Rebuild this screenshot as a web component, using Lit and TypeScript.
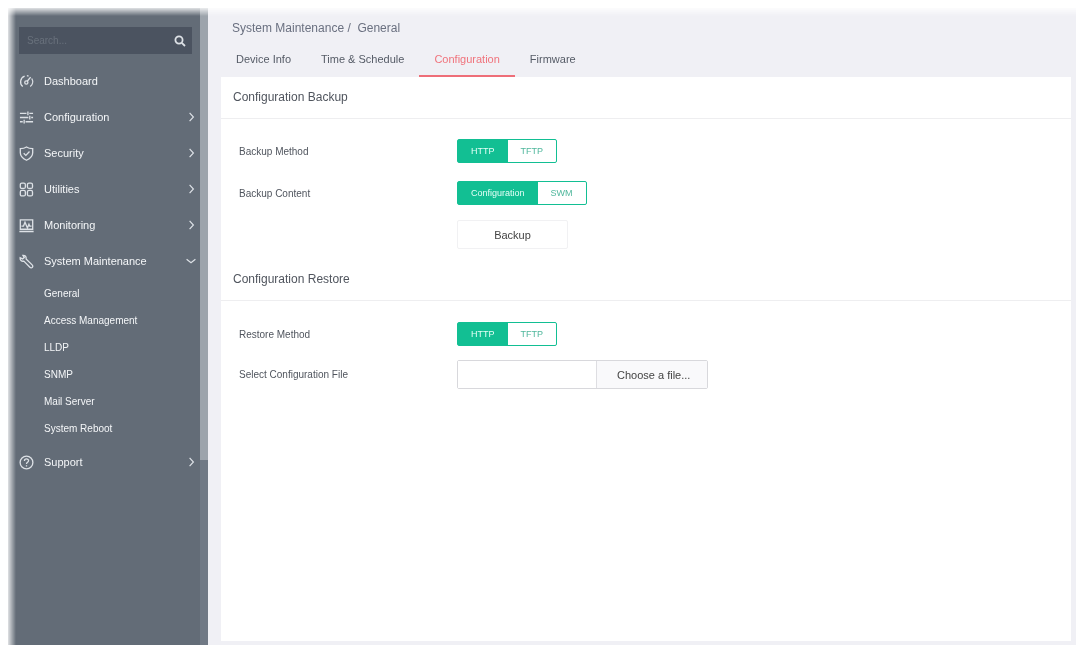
import { LitElement, html, css, svg, nothing } from "lit";
import { customElement, property, state } from "lit/decorators.js";
import { classMap } from "lit/directives/class-map.js";

const icons = {
  dashboard: svg`<path d="M4 13.4A6.600 6.600 0 0 1 6 2.200M8.400 1.800a6.600 6.600 0 0 1 1.800.4M13.600 4.800a6.600 6.600 0 0 1-1.600 8.600"/><circle cx="7.800" cy="9" r="1.700"/><path d="M8.800 7.700l3.600-4.400"/>`,
  configuration: svg`<path d="M1 3.500h7M11 3.500h4M1 8h9M13 8h2M1 12.500h3M7 12.500h8M9.500 1.500v4M11.500 6v4M5.500 10.500v4"/>`,
  security: svg`<path d="M8 1C6 2.400 3.600 2.800 1.400 2.800v4.400c0 3.800 2.600 6.200 6.600 8 4-1.800 6.600-4.200 6.600-8V2.800C12.400 2.800 10 2.400 8 1z"/><path d="M5 7.800l2.300 2.200L11.200 5.800"/>`,
  utilities: svg`<rect x="1.400" y="1.200" width="5.400" height="5.600" rx="1.600"/><rect x="9" y="1.200" width="5.400" height="5.600" rx="1.600"/><rect x="1.400" y="9" width="5.400" height="5.800" rx="1.600"/><rect x="9" y="9" width="5.400" height="5.800" rx="1.600"/>`,
  monitoring: svg`<path d="M1.400 12V2h13.200v10zM.4 14.400h15.200"/><path d="M2.600 8.600h2.200l1.600-4 2.600 6 1.600-4 .8 2h2"/>`,
  maintenance: svg`<path d="M4.200 1.400l1.400 2.400-1.800 1.400L1.200 4C.8 6.400 2.600 8.200 5.200 7.600l6.400 6.600c.8.8 2 .8 2.600 0 .8-.8.6-1.800-.2-2.600L7.600 5.400C8 3 6.600 1.200 4.200 1.400z"/>`,
  support: svg`<circle cx="8" cy="8" r="6.800"/><path d="M5.800 6.400c0-3 4.600-2.800 4.400-.2C10.100 7.800 8 7.800 8 9.600M8 11v1.300"/>`,
};

interface MenuItem {
  label: string;
  icon: keyof typeof icons;
  expandable: boolean;
  children?: string[];
}

const menu: MenuItem[] = [
  { label: "Dashboard", icon: "dashboard", expandable: false },
  { label: "Configuration", icon: "configuration", expandable: true },
  { label: "Security", icon: "security", expandable: true },
  { label: "Utilities", icon: "utilities", expandable: true },
  { label: "Monitoring", icon: "monitoring", expandable: true },
  {
    label: "System Maintenance",
    icon: "maintenance",
    expandable: true,
    children: ["General", "Access Management", "LLDP", "SNMP", "Mail Server", "System Reboot"],
  },
  { label: "Support", icon: "support", expandable: true },
];

@customElement("side-menu")
export class SideMenu extends LitElement {
  @state() private open = "System Maintenance";

  static styles = css`
    :host {
      display: flex;
      background: #636c77;
      color: #f4f6f8;
    }
    .content {
      flex: 1;
      min-width: 0;
      padding: 19px 0 0 11px;
    }
    .search {
      display: flex;
      align-items: center;
      height: 27px;
      margin: 0 8px 9px 0;
      padding: 0 4px 0 8px;
      background: #4b5360;
    }
    input {
      flex: 1;
      min-width: 0;
      padding: 0;
      border: 0;
      outline: 0;
      background: none;
      color: #f1f3f5;
      font: 10px "Liberation Sans", Arial, sans-serif;
    }
    input::placeholder {
      color: #69717c;
      opacity: 1;
    }
    button,
    .item {
      border: 0;
      background: none;
      color: inherit;
      font: inherit;
      text-align: left;
      text-decoration: none;
      cursor: pointer;
    }
    .search button {
      display: flex;
      padding: 2px;
    }
    ul {
      margin: 0;
      padding: 0;
      list-style: none;
    }
    .item {
      display: flex;
      align-items: center;
      gap: 10px;
      box-sizing: border-box;
      width: 100%;
      height: 36px;
      padding: 0 4px 0 0;
      font-size: 11px;
    }
    .label {
      flex: 1;
      white-space: nowrap;
    }
    svg {
      display: block;
      flex: none;
      fill: none;
      stroke: #dde1e6;
    }
    .sub {
      padding: 1px 0 2px;
    }
    .sub a {
      display: block;
      padding-left: 25px;
      color: inherit;
      font-size: 10px;
      line-height: 27px;
      text-decoration: none;
    }
    .scroll {
      width: 8px;
      background: #707985;
    }
    .thumb {
      height: 71%;
      background: #9da4ac;
    }
  `;

  private chevron(open: boolean) {
    return html`<svg width="10" height="10" viewBox="0 0 10 10" stroke-width="1.2" aria-hidden="true">
      ${open ? svg`<path d="M.6 3.2L5 6.8l4.4-3.6"/>` : svg`<path d="M3.6 .8L7.4 5 3.6 9.2"/>`}
    </svg>`;
  }

  private row(item: MenuItem) {
    const isOpen = this.open === item.label;
    const body = html`
      <svg width="15" height="15" viewBox="0 0 16 16" stroke-width="1.4" aria-hidden="true">${icons[item.icon]}</svg>
      <span class="label">${item.label}</span>
      ${item.expandable ? this.chevron(isOpen) : nothing}
    `;
    return html`<li>
      ${item.expandable
        ? html`<button
            class="item"
            aria-expanded=${isOpen ? "true" : "false"}
            @click=${() => (this.open = isOpen ? "" : item.label)}
          >${body}</button>`
        : html`<a class="item" href="#">${body}</a>`}
      ${isOpen && item.children
        ? html`<ul class="sub">${item.children.map((c) => html`<li><a href="#">${c}</a></li>`)}</ul>`
        : nothing}
    </li>`;
  }

  render() {
    return html`
      <nav class="content" aria-label="Main">
        <div class="search">
          <input type="text" placeholder="Search..." aria-label="Search" />
          <button aria-label="Search">
            <svg width="12" height="12" viewBox="0 0 12 12" stroke-width="1.8" aria-hidden="true">
              <circle cx="5" cy="5" r="3.6" /><path d="M7.8 7.8L11 11" />
            </svg>
          </button>
        </div>
        <ul>${menu.map((m) => this.row(m))}</ul>
      </nav>
      <div class="scroll"><div class="thumb"></div></div>
    `;
  }
}

@customElement("toggle-group")
export class ToggleGroup extends LitElement {
  @property() label = "";
  @property({ type: Array }) options: string[] = [];
  @state() private selected = 0;

  static styles = css`
    :host {
      display: block;
    }
    .group {
      display: inline-flex;
      vertical-align: top;
      box-sizing: border-box;
      height: 24px;
      border: 1px solid #12bf93;
      border-radius: 2px;
      background: #fff;
      color: #4fb79c;
      font-size: 9px;
    }
    label {
      position: relative;
      display: flex;
      align-items: center;
      padding: 0 13px;
      cursor: pointer;
    }
    .on {
      background: #12bf93;
      color: #e4fff7;
    }
    input {
      position: absolute;
      inset: 0;
      margin: 0;
      opacity: 0;
    }
  `;

  render() {
    return html`<div class="group" role="radiogroup" aria-label=${this.label}>
      ${this.options.map(
        (o, i) => html`<label class=${classMap({ on: i === this.selected })}>
          <input type="radio" name="choice" .checked=${i === this.selected} @change=${() => (this.selected = i)} />
          ${o}
        </label>`,
      )}
    </div>`;
  }
}

@customElement("app-root")
export class AppRoot extends LitElement {
  @state() private tab = "Configuration";

  static styles = css`
    :host {
      display: block;
      background: #fff;
      font-family: "Liberation Sans", Arial, sans-serif;
    }
    .frame {
      display: flex;
      box-sizing: border-box;
      min-height: 100vh;
      padding: 8px 0 0 8px;
      -webkit-mask-image: linear-gradient(to right, transparent 6px, #000 16px),
        linear-gradient(to bottom, transparent 6px, #000 16px);
      -webkit-mask-composite: source-in;
      mask-composite: intersect;
    }
    side-menu {
      flex: none;
      width: 200px;
    }
    main {
      flex: 1;
      min-width: 0;
      display: flex;
      flex-direction: column;
      padding: 13px 5px 4px 13px;
      background: #f0f0f5;
    }
    .crumbs {
      margin: 0;
      padding-left: 11px;
      color: #6a7080;
      font-size: 12px;
      font-weight: normal;
      line-height: 14px;
      white-space: pre;
    }
    .tabs {
      display: flex;
    }
    .tabs a {
      padding: 18px 15px 9px;
      border-bottom: 2px solid transparent;
      color: #555b66;
      font-size: 11px;
      line-height: 13px;
      text-decoration: none;
    }
    .tabs .active {
      border-color: #ee6e78;
      color: #f0737c;
    }
    .card {
      flex: 1;
      background: #fff;
      color: #50555e;
    }
    h2 {
      margin: 0;
      padding: 0 12px;
      border-bottom: 1px solid #eeeef0;
      font-size: 12px;
      font-weight: normal;
      line-height: 41px;
    }
    .rows {
      display: grid;
      gap: 18px;
      padding: 20px 18px 10px;
    }
    .row {
      display: grid;
      grid-template-columns: 218px 1fr;
      align-items: center;
      font-size: 10px;
    }
    .actions {
      display: grid;
      gap: 15px;
    }
    .backup {
      grid-column: 2;
      justify-self: start;
      width: 111px;
      height: 29px;
      border: 1px solid #f1f1f3;
      border-radius: 2px;
      background: #fff;
      color: #444;
      font: inherit;
      font-size: 11px;
    }
    .file {
      display: flex;
      width: 251px;
      height: 29px;
      box-sizing: border-box;
      border: 1px solid #d8d8dc;
      border-radius: 2px;
    }
    .file input {
      flex: 1;
      min-width: 0;
      padding: 0 8px;
      border: 0;
      background: #fff;
    }
    .file button {
      width: 111px;
      padding: 0 16px 0 20px;
      border: 0;
      border-left: 1px solid #dedee2;
      background: #f9f9fb;
      color: #444;
      font: inherit;
      font-size: 11px;
      text-align: left;
      white-space: nowrap;
    }
    .rows.restore {
      gap: 14px;
      padding-top: 21px;
    }
  `;

  render() {
    return html`
      <div class="frame">
        <side-menu></side-menu>
        <main>
          <h1 class="crumbs">System Maintenance /  General</h1>
          <nav class="tabs" aria-label="Sections">
            ${["Device Info", "Time & Schedule", "Configuration", "Firmware"].map(
              (t) => html`<a
                href="#"
                class=${classMap({ active: t === this.tab })}
                @click=${(e: Event) => {
                  e.preventDefault();
                  this.tab = t;
                }}
              >${t}</a>`,
            )}
          </nav>
          <div class="card">
            <section>
              <h2>Configuration Backup</h2>
              <div class="rows">
                <div class="row">
                  <span>Backup Method</span>
                  <toggle-group label="Backup Method" .options=${["HTTP", "TFTP"]}></toggle-group>
                </div>
                <div class="actions">
                  <div class="row">
                    <span>Backup Content</span>
                    <toggle-group label="Backup Content" .options=${["Configuration", "SWM"]}></toggle-group>
                  </div>
                  <div class="row"><button class="backup">Backup</button></div>
                </div>
              </div>
            </section>
            <section>
              <h2>Configuration Restore</h2>
              <div class="rows restore">
                <div class="row">
                  <span>Restore Method</span>
                  <toggle-group label="Restore Method" .options=${["HTTP", "TFTP"]}></toggle-group>
                </div>
                <div class="row">
                  <label for="file">Select Configuration File</label>
                  <div class="file">
                    <input id="file" type="text" readonly />
                    <button>Choose a file...</button>
                  </div>
                </div>
              </div>
            </section>
          </div>
        </main>
      </div>
    `;
  }
}
